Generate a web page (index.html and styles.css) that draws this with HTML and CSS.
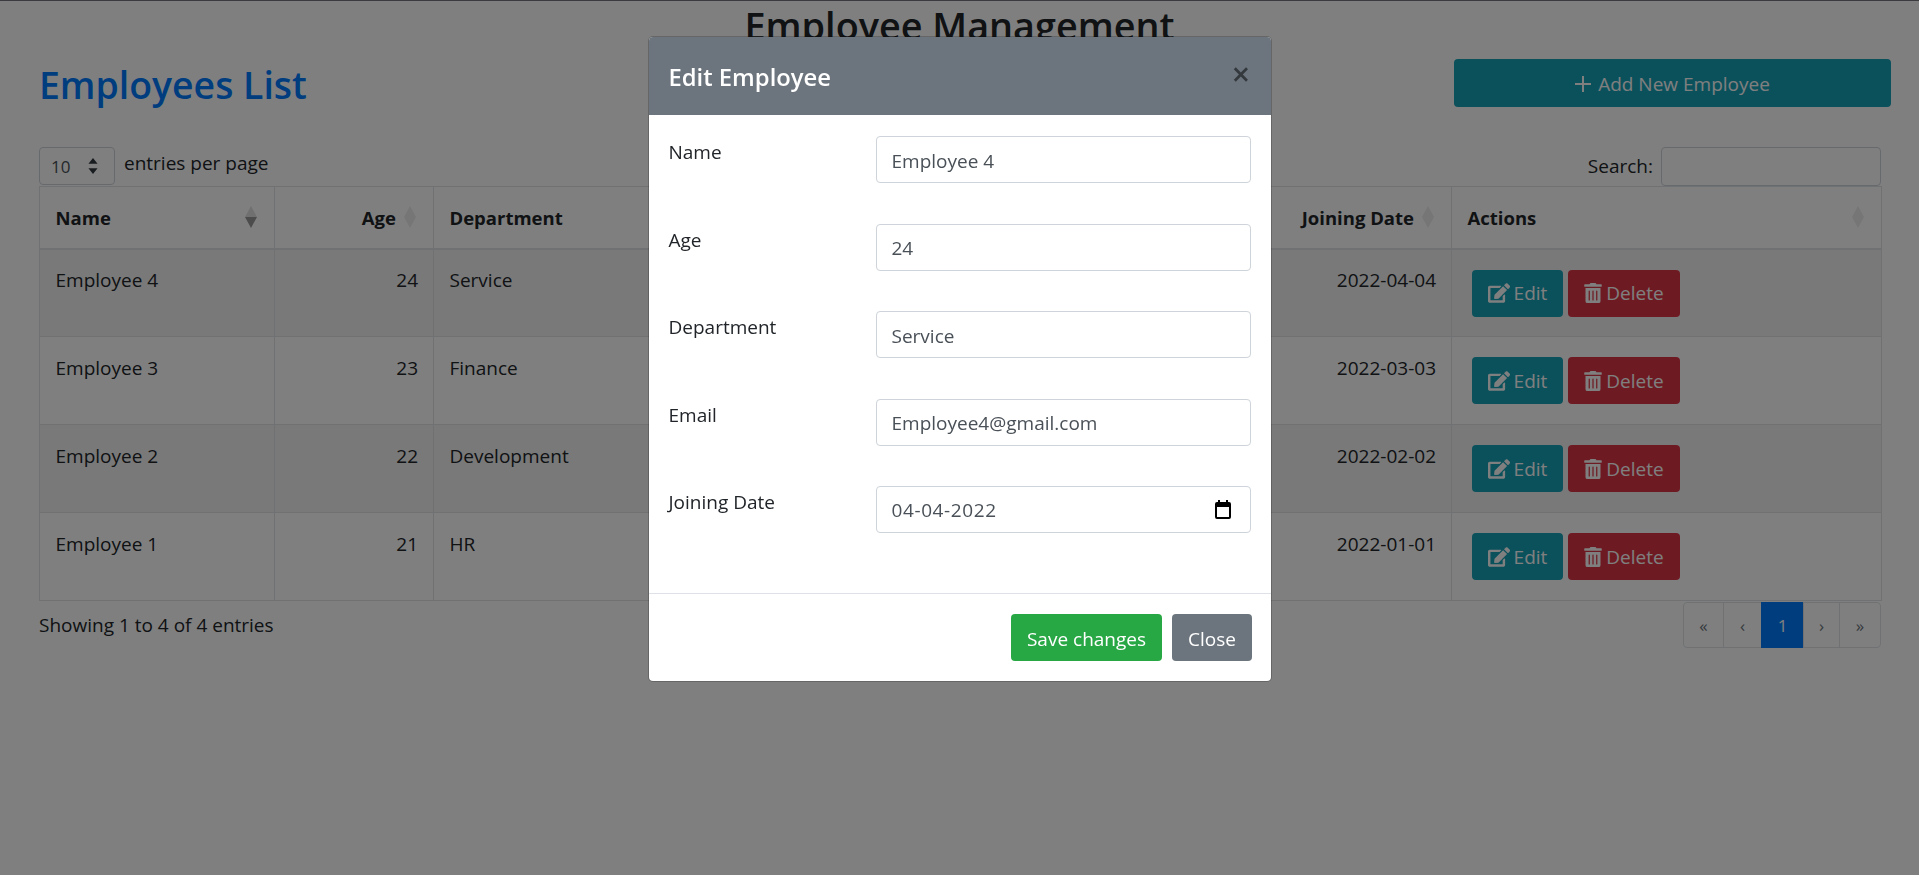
FILE: index.html
```html
<!DOCTYPE html>
<html lang="en">
<head>
  <meta charset="UTF-8">
  <title>Employee Management</title>
  <link rel="stylesheet" href="styles.css">
</head>
<body>
  <h1 class="page-title">Employee Management</h1>

  <div class="top-row">
    <h2 class="list-title">Employees List</h2>
    <button class="btn btn-info btn-add">
      <svg class="plus" viewBox="0 0 16 16"><path d="M8 0v16M0 8h16"/></svg>
      Add New Employee
    </button>
  </div>

  <div class="table-wrap">
    <div class="controls">
      <div class="per-page">
        <div class="fake-select">
          <span>10</span>
          <svg viewBox="0 0 8 14" class="select-arrows"><path d="M4 0l4 5H0zM4 14L0 9h8z"/></svg>
        </div>
        <span class="per-page-text">entries per page</span>
      </div>
      <label class="search">Search: <input type="text" class="search-input"></label>
    </div>

    <table class="emp-table">
      <colgroup>
        <col class="col-name">
        <col class="col-age">
        <col class="col-dept">
        <col class="col-email">
        <col class="col-date">
        <col class="col-actions">
      </colgroup>
      <thead>
        <tr>
          <th><div class="th-in"><span>Name</span><i class="sort sort-down"></i></div></th>
          <th><div class="th-in th-right"><span>Age</span><i class="sort"></i></div></th>
          <th><div class="th-in"><span>Department</span><i class="sort"></i></div></th>
          <th><div class="th-in"><span>Email</span><i class="sort"></i></div></th>
          <th><div class="th-in th-right"><span>Joining Date</span><i class="sort"></i></div></th>
          <th><div class="th-in"><span>Actions</span><i class="sort"></i></div></th>
        </tr>
      </thead>
      <tbody>
        <tr class="odd">
          <td>Employee 4</td><td class="num">24</td><td>Service</td><td>Employee4@gmail.com</td><td class="num">2022-04-04</td>
          <td class="actions">
            <button class="btn btn-info btn-row"><svg class="ico ico-edit" viewBox="0 0 576 512"><path d="M402.6 83.2l90.2 90.2c3.8 3.8 3.8 10 0 13.8L274.4 405.6l-92.8 10.3c-12.4 1.4-22.9-9.1-21.5-21.5l10.3-92.8L388.8 83.2c3.8-3.8 10-3.8 13.8 0zm162-22.9l-48.8-48.8c-15.2-15.2-39.9-15.2-55.2 0l-35.4 35.4c-3.8 3.8-3.8 10 0 13.8l90.2 90.2c3.8 3.8 10 3.8 13.8 0l35.4-35.4c15.2-15.3 15.2-40 0-55.2zM384 346.2V448H64V128h229.8c3.2 0 6.2-1.3 8.5-3.5l40-40c7.6-7.6 2.2-20.5-8.5-20.5H48C21.5 64 0 85.5 0 112v352c0 26.5 21.5 48 48 48h352c26.5 0 48-21.5 48-48V306.2c0-10.7-12.9-16-20.5-8.5l-40 40c-2.2 2.3-3.5 5.3-3.5 8.5z"/></svg>Edit</button>
            <button class="btn btn-danger btn-row"><svg class="ico ico-trash" viewBox="0 0 448 512"><path d="M32 464a48 48 0 0 0 48 48h288a48 48 0 0 0 48-48V128H32zm272-256a16 16 0 0 1 32 0v224a16 16 0 0 1-32 0zm-96 0a16 16 0 0 1 32 0v224a16 16 0 0 1-32 0zm-96 0a16 16 0 0 1 32 0v224a16 16 0 0 1-32 0zM432 32H312l-9.4-18.7A24 24 0 0 0 281.1 0H166.8a23.72 23.72 0 0 0-21.4 13.3L136 32H16A16 16 0 0 0 0 48v32a16 16 0 0 0 16 16h416a16 16 0 0 0 16-16V48a16 16 0 0 0-16-16z"/></svg>Delete</button>
          </td>
        </tr>
        <tr>
          <td>Employee 3</td><td class="num">23</td><td>Finance</td><td>Employee3@gmail.com</td><td class="num">2022-03-03</td>
          <td class="actions">
            <button class="btn btn-info btn-row"><svg class="ico ico-edit" viewBox="0 0 576 512"><path d="M402.6 83.2l90.2 90.2c3.8 3.8 3.8 10 0 13.8L274.4 405.6l-92.8 10.3c-12.4 1.4-22.9-9.1-21.5-21.5l10.3-92.8L388.8 83.2c3.8-3.8 10-3.8 13.8 0zm162-22.9l-48.8-48.8c-15.2-15.2-39.9-15.2-55.2 0l-35.4 35.4c-3.8 3.8-3.8 10 0 13.8l90.2 90.2c3.8 3.8 10 3.8 13.8 0l35.4-35.4c15.2-15.3 15.2-40 0-55.2zM384 346.2V448H64V128h229.8c3.2 0 6.2-1.3 8.5-3.5l40-40c7.6-7.6 2.2-20.5-8.5-20.5H48C21.5 64 0 85.5 0 112v352c0 26.5 21.5 48 48 48h352c26.5 0 48-21.5 48-48V306.2c0-10.7-12.9-16-20.5-8.5l-40 40c-2.2 2.3-3.5 5.3-3.5 8.5z"/></svg>Edit</button>
            <button class="btn btn-danger btn-row"><svg class="ico ico-trash" viewBox="0 0 448 512"><path d="M32 464a48 48 0 0 0 48 48h288a48 48 0 0 0 48-48V128H32zm272-256a16 16 0 0 1 32 0v224a16 16 0 0 1-32 0zm-96 0a16 16 0 0 1 32 0v224a16 16 0 0 1-32 0zm-96 0a16 16 0 0 1 32 0v224a16 16 0 0 1-32 0zM432 32H312l-9.4-18.7A24 24 0 0 0 281.1 0H166.8a23.72 23.72 0 0 0-21.4 13.3L136 32H16A16 16 0 0 0 0 48v32a16 16 0 0 0 16 16h416a16 16 0 0 0 16-16V48a16 16 0 0 0-16-16z"/></svg>Delete</button>
          </td>
        </tr>
        <tr class="odd">
          <td>Employee 2</td><td class="num">22</td><td>Development</td><td>Employee2@gmail.com</td><td class="num">2022-02-02</td>
          <td class="actions">
            <button class="btn btn-info btn-row"><svg class="ico ico-edit" viewBox="0 0 576 512"><path d="M402.6 83.2l90.2 90.2c3.8 3.8 3.8 10 0 13.8L274.4 405.6l-92.8 10.3c-12.4 1.4-22.9-9.1-21.5-21.5l10.3-92.8L388.8 83.2c3.8-3.8 10-3.8 13.8 0zm162-22.9l-48.8-48.8c-15.2-15.2-39.9-15.2-55.2 0l-35.4 35.4c-3.8 3.8-3.8 10 0 13.8l90.2 90.2c3.8 3.8 10 3.8 13.8 0l35.4-35.4c15.2-15.3 15.2-40 0-55.2zM384 346.2V448H64V128h229.8c3.2 0 6.2-1.3 8.5-3.5l40-40c7.6-7.6 2.2-20.5-8.5-20.5H48C21.5 64 0 85.5 0 112v352c0 26.5 21.5 48 48 48h352c26.5 0 48-21.5 48-48V306.2c0-10.7-12.9-16-20.5-8.5l-40 40c-2.2 2.3-3.5 5.3-3.5 8.5z"/></svg>Edit</button>
            <button class="btn btn-danger btn-row"><svg class="ico ico-trash" viewBox="0 0 448 512"><path d="M32 464a48 48 0 0 0 48 48h288a48 48 0 0 0 48-48V128H32zm272-256a16 16 0 0 1 32 0v224a16 16 0 0 1-32 0zm-96 0a16 16 0 0 1 32 0v224a16 16 0 0 1-32 0zm-96 0a16 16 0 0 1 32 0v224a16 16 0 0 1-32 0zM432 32H312l-9.4-18.7A24 24 0 0 0 281.1 0H166.8a23.72 23.72 0 0 0-21.4 13.3L136 32H16A16 16 0 0 0 0 48v32a16 16 0 0 0 16 16h416a16 16 0 0 0 16-16V48a16 16 0 0 0-16-16z"/></svg>Delete</button>
          </td>
        </tr>
        <tr>
          <td>Employee 1</td><td class="num">21</td><td>HR</td><td>Employee1@gmail.com</td><td class="num">2022-01-01</td>
          <td class="actions">
            <button class="btn btn-info btn-row"><svg class="ico ico-edit" viewBox="0 0 576 512"><path d="M402.6 83.2l90.2 90.2c3.8 3.8 3.8 10 0 13.8L274.4 405.6l-92.8 10.3c-12.4 1.4-22.9-9.1-21.5-21.5l10.3-92.8L388.8 83.2c3.8-3.8 10-3.8 13.8 0zm162-22.9l-48.8-48.8c-15.2-15.2-39.9-15.2-55.2 0l-35.4 35.4c-3.8 3.8-3.8 10 0 13.8l90.2 90.2c3.8 3.8 10 3.8 13.8 0l35.4-35.4c15.2-15.3 15.2-40 0-55.2zM384 346.2V448H64V128h229.8c3.2 0 6.2-1.3 8.5-3.5l40-40c7.6-7.6 2.2-20.5-8.5-20.5H48C21.5 64 0 85.5 0 112v352c0 26.5 21.5 48 48 48h352c26.5 0 48-21.5 48-48V306.2c0-10.7-12.9-16-20.5-8.5l-40 40c-2.2 2.3-3.5 5.3-3.5 8.5z"/></svg>Edit</button>
            <button class="btn btn-danger btn-row"><svg class="ico ico-trash" viewBox="0 0 448 512"><path d="M32 464a48 48 0 0 0 48 48h288a48 48 0 0 0 48-48V128H32zm272-256a16 16 0 0 1 32 0v224a16 16 0 0 1-32 0zm-96 0a16 16 0 0 1 32 0v224a16 16 0 0 1-32 0zm-96 0a16 16 0 0 1 32 0v224a16 16 0 0 1-32 0zM432 32H312l-9.4-18.7A24 24 0 0 0 281.1 0H166.8a23.72 23.72 0 0 0-21.4 13.3L136 32H16A16 16 0 0 0 0 48v32a16 16 0 0 0 16 16h416a16 16 0 0 0 16-16V48a16 16 0 0 0-16-16z"/></svg>Delete</button>
          </td>
        </tr>
      </tbody>
    </table>

    <div class="table-foot">
      <div class="info">Showing 1 to 4 of 4 entries</div>
      <ul class="pager">
        <li class="pg-first">«</li>
        <li class="pg-prev">‹</li>
        <li class="pg-active">1</li>
        <li class="pg-next">›</li>
        <li class="pg-last">»</li>
      </ul>
    </div>
  </div>

  <!-- edit popup -->
  <div class="backdrop"></div>
  <div class="modal-wrap">
    <div class="modal">
      <div class="modal-head">
        <h5 class="modal-title">Edit Employee</h5>
        <span class="close-x">×</span>
      </div>
      <div class="modal-body">
        <div class="form-row">
          <label class="form-label">Name</label>
          <input class="form-input" type="text" value="Employee 4">
        </div>
        <div class="form-row">
          <label class="form-label">Age</label>
          <input class="form-input" type="text" value="24">
        </div>
        <div class="form-row">
          <label class="form-label">Department</label>
          <input class="form-input" type="text" value="Service">
        </div>
        <div class="form-row">
          <label class="form-label">Email</label>
          <input class="form-input" type="text" value="Employee4@gmail.com">
        </div>
        <div class="form-row">
          <label class="form-label">Joining Date</label>
          <div class="date-box">
            <span class="date-val">04-04-2022</span>
            <svg class="cal" viewBox="0 0 16 19"><path d="M3 0h2v2h6V0h2v2h1a2 2 0 0 1 2 2v13a2 2 0 0 1-2 2H2a2 2 0 0 1-2-2V4a2 2 0 0 1 2-2h1zM2 7v10h12V7z"/></svg>
          </div>
        </div>
      </div>
      <div class="modal-foot">
        <button class="btn btn-success btn-save">Save changes</button>
        <button class="btn btn-secondary btn-close">Close</button>
      </div>
    </div>
  </div>
</body>
</html>
```

FILE: styles.css
```css
* {
  box-sizing: border-box;
}
body {
  margin: 0;
  font-family: "Open Sans", "Noto Sans", sans-serif;
  font-size: 19px;
  line-height: 27px;
  color: #212529;
  background: white;
  border-top: 1px solid #74747e;
}
.page-title {
  margin: 0;
  text-align: center;
  font-size: 37.8px;
  font-weight: 600;
  line-height: 50px;
}
.top-row {
  display: flex;
  justify-content: space-between;
  align-items: flex-start;
  margin: 8px 28px 0 39px;
}
.list-title {
  margin: 0;
  padding-top: 2px;
  font-size: 37.4px;
  font-weight: 600;
  line-height: 48px;
  color: #007bff;
}
.btn {
  border: none;
  border-radius: 4px;
  font-family: inherit;
  font-size: 19px;
  color: white;
  cursor: pointer;
  display: inline-flex;
  align-items: center;
  justify-content: center;
  height: 47px;
  padding: 0;
}
.btn-info { background: #17a2b8; }
.btn-danger { background: #dc3545; }
.btn-success { background: #28a745; }
.btn-secondary { background: #6c757d; }
.btn-add {
  width: 437px;
  height: 48px;
  gap: 7px;
  padding-top: 1px;
}
.plus {
  width: 16px;
  height: 16px;
  fill: none;
  stroke: white;
  stroke-width: 2;
}
.table-wrap {
  margin: 38px 38px 0 39px;
}
.controls {
  display: flex;
  justify-content: space-between;
  height: 39px;
}
.per-page {
  display: flex;
  gap: 9px;
}
.per-page-text {
  padding-top: 3px;
}
.fake-select {
  width: 76px;
  height: 38px;
  border: 1px solid #ced4da;
  border-radius: 4px;
  display: flex;
  justify-content: space-between;
  align-items: center;
  padding: 0 16px 0 11px;
  font-size: 17px;
  color: #495057;
}
.select-arrows {
  width: 10px;
  height: 16px;
  fill: #343a40;
}
.search {
  display: flex;
  gap: 8px;
  align-items: center;
}
.search-input {
  width: 220px;
  height: 39px;
  border: 1px solid #ced4da;
  border-radius: 4px;
  background: white;
}
.emp-table {
  width: 1842px;
  table-layout: fixed;
  border-collapse: collapse;
}
.col-name { width: 235px; }
.col-age { width: 159px; }
.col-dept { width: 370px; }
.col-email { width: 462px; }
.col-date { width: 186px; }
.col-actions { width: 430px; }
.emp-table th,
.emp-table td {
  border: 1px solid #dee2e6;
  vertical-align: top;
}
.emp-table th {
  height: 62px;
  padding: 0 16px 0 15.5px;
  border-bottom-width: 2px;
  vertical-align: middle;
  text-align: left;
  font-weight: 700;
  font-size: 18.5px;
}
.emp-table td {
  height: 88px;
  padding: 17.5px 15px 0 15.5px;
}
.odd td {
  background: rgba(0,0,0,0.05);
}
.th-in {
  display: flex;
  justify-content: space-between;
  align-items: center;
}
.th-right {
  justify-content: flex-end;
  gap: 8px;
}
.sort {
  flex: none;
  width: 12px;
  height: 22px;
  display: flex;
  flex-direction: column;
  margin-right: 1px;
}
.sort::before,
.sort::after {
  content: "";
  display: block;
  border-left: 6px solid transparent;
  border-right: 6px solid transparent;
}
.sort::before { border-bottom: 11px solid #ececec; }
.sort::after { border-top: 11px solid #ececec; }
.sort-down::after { border-top-color: #999999; }
.sort-down::before { border-bottom-color: #e0e0e0; }
.num {
  text-align: right;
}
.emp-table td.actions {
  padding: 20px 20px 0;
  font-size: 0;
}
.btn-row {
  gap: 4px;
  height: 47px;
  margin-right: 5px;
}
.btn-row.btn-info { width: 91px; }
.btn-row.btn-danger { width: 112px; }
.ico {
  fill: white;
  height: 20px;
}
.ico-edit { width: 22px; }
.ico-trash { width: 18px; }
.table-foot {
  display: flex;
  justify-content: space-between;
  margin-top: 1px;
}
.info {
  padding-top: 10px;
}
.pager {
  display: flex;
  list-style: none;
  margin: 0;
  padding: 0;
  height: 46px;
  color: #6c757d;
}
.pager li {
  border: 1px solid #dee2e6;
  margin-left: -1px;
  display: flex;
  align-items: center;
  justify-content: center;
  font-size: 17px;
}
.pg-first { width: 41px; border-radius: 4px 0 0 4px; }
.pg-prev { width: 39px; }
.pg-active {
  width: 43px;
  background: #007bff;
  border-color: #007bff !important;
  color: white;
}
.pg-next { width: 37px; }
.pg-last { width: 42px; border-radius: 0 4px 4px 0; }

/* popup */
.backdrop {
  position: fixed;
  top: 0;
  left: 0;
  right: 0;
  bottom: 0;
  background: rgba(0,0,0,0.5);
}
.modal-wrap {
  position: fixed;
  top: 0;
  left: 0;
  right: 0;
  bottom: 0;
  display: flex;
  justify-content: center;
  align-items: flex-start;
  padding: 36px 0 0 1px;
}
.modal {
  width: 624px;
  height: 646px;
  background: white;
  border: 1px solid rgba(0,0,0,0.2);
  border-radius: 5px;
  background-clip: padding-box;
  display: flex;
  flex-direction: column;
}
.modal-head {
  height: 78px;
  background: #6c757d;
  border-radius: 4px 4px 0 0;
  color: white;
  display: flex;
  justify-content: space-between;
  align-items: center;
  padding: 0 21px 0 19.5px;
}
.modal-title {
  margin: 0;
  padding-top: 2px;
  font-size: 23.8px;
  font-weight: 600;
}
.close-x {
  font-size: 32px;
  font-weight: 600;
  color: #34393e;
  margin-top: -6px;
}
.modal-body {
  flex: 1;
  padding: 21px 20px 0 19.5px;
}
.form-row {
  display: flex;
  height: 47px;
  margin-bottom: 40.5px;
}
.form-label {
  width: 207px;
  padding-top: 3px;
}
.form-input,
.date-box {
  flex: 1;
  height: 47px;
  border: 1px solid #ced4da;
  border-radius: 4px;
  padding: 2px 15px 0;
  font-family: inherit;
  font-size: 19px;
  color: #495057;
}
.date-box {
  display: flex;
  justify-content: space-between;
  align-items: center;
  padding-right: 19px;
}
.date-val {
  letter-spacing: 0.6px;
}
.cal {
  width: 16px;
  height: 19px;
  margin-top: -2px;
  fill: black;
}
.modal-foot {
  border-top: 1px solid #dee2e6;
  padding: 20px 19px 20px 0;
  display: flex;
  justify-content: flex-end;
  gap: 10px;
}
.btn-save,
.btn-close {
  padding-top: 2px;
}
.btn-save { width: 151px; }
.btn-close { width: 80px; }
```
